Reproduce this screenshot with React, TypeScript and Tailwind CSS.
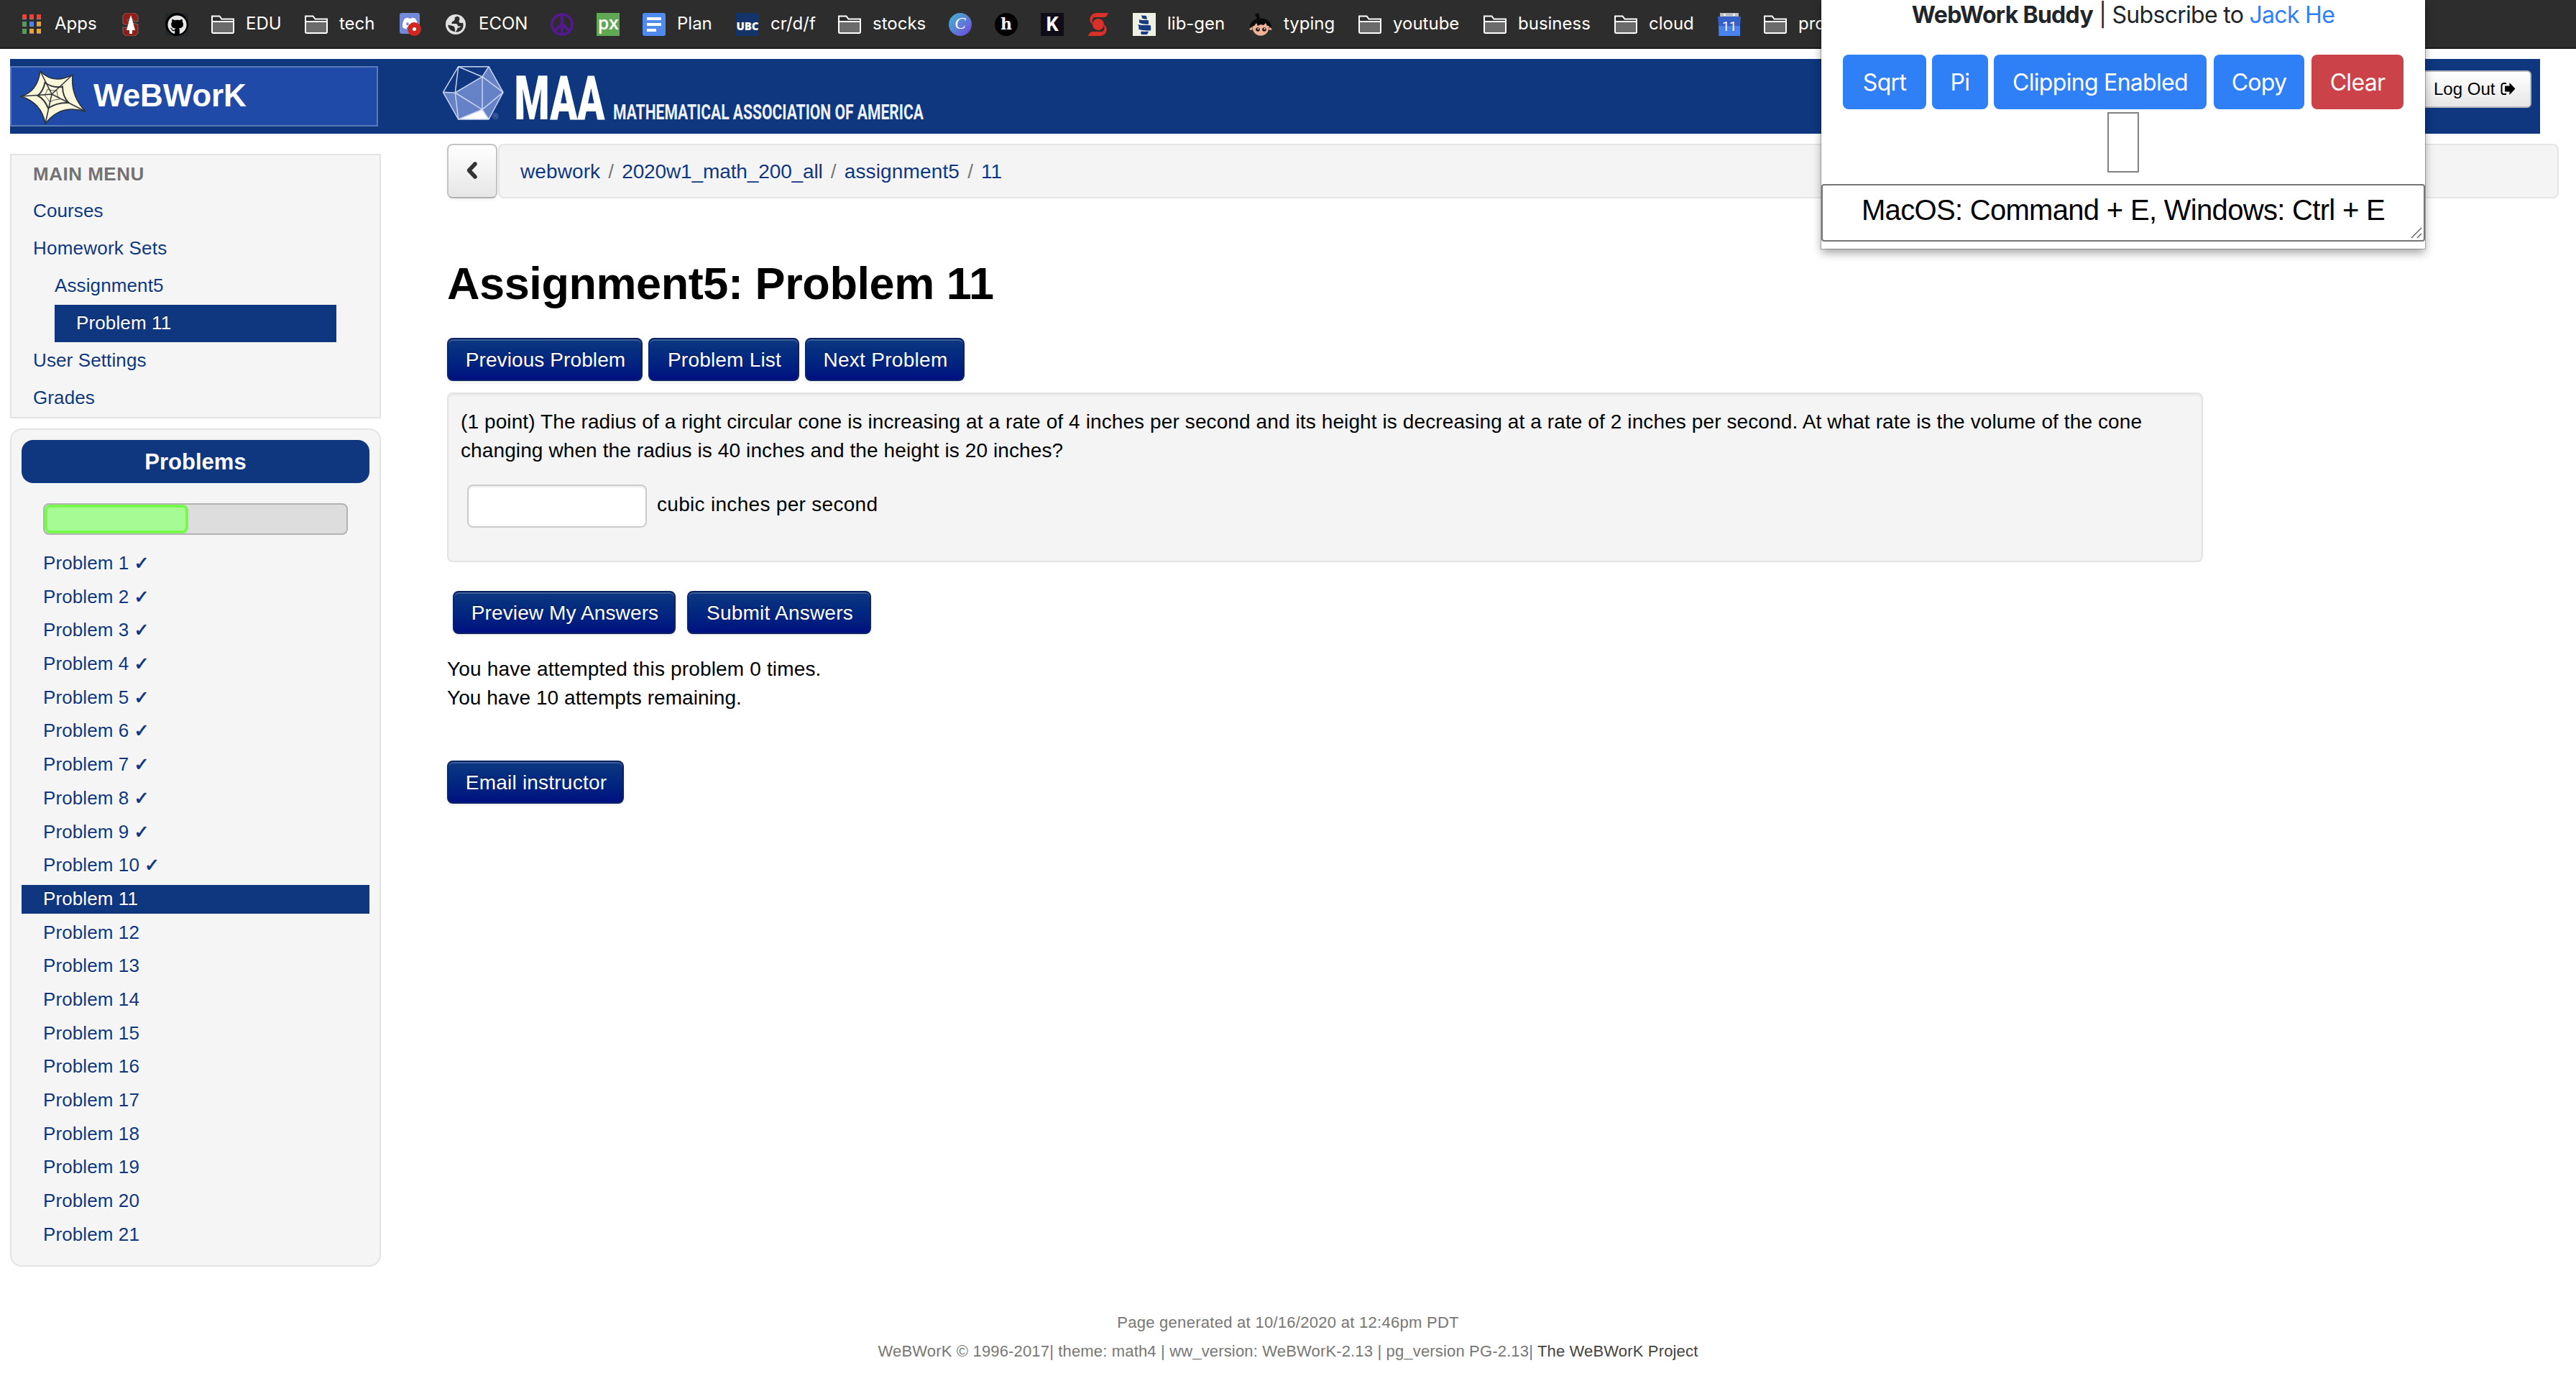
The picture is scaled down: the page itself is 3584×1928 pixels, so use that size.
import React from "react";
import { FaDiscord, FaGithub } from "react-icons/fa";

const FolderIcon = () => (
  <svg className="block size-8" viewBox="0 0 32 32">
    <path d="M1 26.5V4.5h10.5l3 4H31v18a1.500 1.500 0 0 1-1.500 1.500h-27A1.500 1.500 0 0 1 1 26.500z" fill="#2d2d2d" stroke="#fff" strokeWidth="2" />
    <path d="M2 12h28v15H2z" fill="#6b6b6b" />
    <path d="M1 12h30" stroke="#fff" strokeWidth="2" />
  </svg>
);

const AppsIcon = () => (
  <svg className="block size-8" viewBox="0 0 32 32">
    {[
      ["#ea4335", "#ea4335", "#ea4335"],
      ["#4e9f58", "#4285f4", "#eaa337"],
      ["#4e9f58", "#eaa337", "#eaa337"],
    ].map((row, y) =>
      row.map((c, x) => (
        <g key={`${x}-${y}`}>
          <rect x={3 + x * 10} y={2 + y * 10} width="6" height="6" fill={c} />
          <rect x={3 + x * 10} y={8 + y * 10} width="6" height="1" fill="#8a8a8a" />
        </g>
      ))
    )}
  </svg>
);

const StanfordIcon = () => (
  <svg className="block size-8" viewBox="0 0 32 32">
    <path d="M9 0h13l4 4v8h-6v-3H11v3l15 4v12l-4 4H9l-4-4v-8h6v3h9v-4L5 15V4z" fill="#8c1f1a" stroke="#b08a88" strokeWidth="0.6" />
    <path d="M16 3l-2 6-2 8-2 7h4v5h4v-5h4l-2-7-2-8z" fill="#fff" />
  </svg>
);

const GithubIcon = () => (
  <div className="flex size-8 items-center justify-center bg-[#24292e]">
    <div className="flex size-8 items-center justify-center rounded-full bg-black">
      <FaGithub className="size-[27px] text-[#e6e6e6]" />
    </div>
  </div>
);

const DiscordIcon = () => (
  <div className="relative h-8 w-8">
    <div className="flex h-[29px] w-[28px] items-center justify-center rounded-[3px] bg-[#7289da]">
      <FaDiscord className="size-[23px] text-white" />
    </div>
    <div className="absolute top-[13px] left-[11px] flex size-[19px] items-center justify-center rounded-full bg-[#d0281e]">
      <div className="size-[5px] rounded-full bg-white" />
    </div>
  </div>
);

const GlobeIcon = () => (
  <svg className="block size-8" viewBox="0 0 32 32">
    <circle cx="16" cy="16" r="14" fill="#e1e1e1" />
    <path d="M18 4.500c-1.500 1-3.500 1.500-3.500 3 .500 1.500 0 2.500-1 3.500-2 .500-3.500 2-3 4h6c2 .500 2.500 2 2.500 3.500h4c-.500 2-3 2-4.500 2.500 0 2-1.500 4-3 5.500 5 .500 9-2 10.500-6 1-3 .500-5 0-7-2 .800-4.500 1-5-.500-.500-1-1-2.500.500-3.500-.500-1.500 0-2.500-.500-3.500z" fill="#2d2d2d" />
    <path d="M5.500 16.500l6 1.500c2 .500 3.500 1.500 3 3.500 1 1 .500 2.500.500 4.500C9 25.500 5 21 5.500 16.500z" fill="#2d2d2d" />
  </svg>
);

const PeaceIcon = () => (
  <svg className="block size-8" viewBox="0 0 32 32" fill="none" stroke="#541991" strokeWidth="3.600">
    <circle cx="16" cy="16" r="14" />
    <path d="M16 2v28M16 15L6 25M16 15l10 10" strokeWidth="4" />
  </svg>
);

const PxIcon = () => (
  <div className="size-8 bg-[#60a854] text-center font-['Open_Sans',sans-serif] text-[25px] leading-[26px] font-semibold tracking-[-0.5px] text-white">px</div>
);

const DocIcon = () => (
  <svg className="block size-8" viewBox="0 0 32 32">
    <rect width="32" height="32" rx="3" fill="#4f8bee" />
    <path d="M6 8h20M6 16h20M6 24h13" stroke="#fff" strokeWidth="4" />
  </svg>
);

const UbcIcon = () => (
  <div className="flex size-8 items-center justify-center bg-[#12346a] pt-1 font-['Open_Sans',sans-serif] text-[15px] leading-none font-extrabold text-white">UBC</div>
);

const CanvaIcon = () => (
  <div className="size-8 rounded-full bg-linear-to-br from-[#35b5c8] to-[#6a3ae0] text-center font-['Liberation_Serif',serif] text-[23px] leading-[30px] text-white italic">C</div>
);

const HIcon = () => (
  <div className="size-8 rounded-full bg-black text-center font-['DejaVu_Serif',serif] text-[22px] leading-[31px] font-bold text-white">h</div>
);

const KIcon = () => (
  <div className="size-8 bg-[#0f0c18] text-center font-[Roboto,sans-serif] text-[27px] leading-8 font-bold text-white">K</div>
);

const ScotiaIcon = () => (
  <svg className="block size-8" viewBox="0 0 32 32" fill="#d9302a">
    <circle cx="16" cy="16" r="8" />
    <path d="M30 0c-1 3-3 6-6 6H12c-3 0-4.500 2-4.500 5l.500 5c-4-3-5-8-2-12 2-3 5-4 8-4z" />
    <path d="M2 32c1-3 3-6 6-6h12c3 0 4.500-2 4.500-5L24 16c4 3 5 8 2 12-2 3-5 4-8 4z" />
  </svg>
);

const LibgenIcon = () => (
  <svg className="block size-8" viewBox="0 0 32 32">
    <rect width="32" height="32" fill="#eef0e2" />
    <path d="M12 3c3 1.500 5 0 7 1.500l1 4c-2 .500-5 0-7-1zM9 9c4 2 9 0 13 1.500v5c-4 .500-9 0-13-2zM7 16c6 2 13 0 18 1.500 0 2 .500 5 0 7-6 0-12 0-17-2 1-1.500.500-4.500-1-6.500zM12 25.500c4 1 8 0 10 .500l-2 4h-8c-1-1-1-3 0-4.500z" fill="#173a80" />
  </svg>
);

const TypingIcon = () => (
  <svg className="block size-8" viewBox="0 0 32 32">
    <path d="M8 2l5-2 2 8h-4z" fill="#0b0b0d" />
    <circle cx="16" cy="20" r="11.500" fill="#efb397" />
    <circle cx="2.500" cy="22" r="2" fill="#efb397" />
    <circle cx="29.500" cy="22" r="2" fill="#efb397" />
    <path d="M1 22C0 13 7 7.500 16 7.500S32 13 31 22l-3-4-3 0-2-4-3 3-4-1-4 2-2-4-3 4-4 1z" fill="#0b0b0d" />
    <circle cx="12" cy="23" r="2.800" fill="#2b1512" />
    <circle cx="21" cy="23" r="2.800" fill="#2b1512" />
    <circle cx="12.500" cy="22" r="1" fill="#fff" />
    <circle cx="21.500" cy="22" r="1" fill="#fff" />
  </svg>
);

const CalendarIcon = () => (
  <div className="relative size-8">
    <svg className="block size-8" viewBox="0 0 32 32">
      <path d="M3 0h26v8H3z" fill="#b9bdc4" />
      <circle cx="9.500" cy="2.500" r="1.500" fill="#fff" />
      <circle cx="22.500" cy="2.500" r="1.500" fill="#fff" />
      <path d="M0 5h32l-1 13H1z" fill="#3560c8" />
      <path d="M1 18h30v14H1.500z" fill="#4a83ee" />
    </svg>
    <div className="absolute inset-0 text-center font-[Roboto,sans-serif] text-[18px] leading-[37px] text-white">11</div>
  </div>
);

const bookmarks: { icon: () => React.ReactElement; label?: string; box: string }[] = [
  { icon: AppsIcon, label: "Apps", box: "w-[138px]" },
  { icon: StanfordIcon, box: "w-[64px]" },
  { icon: GithubIcon, box: "w-[64px]" },
  { icon: FolderIcon, label: "EDU", box: "w-[130px]" },
  { icon: FolderIcon, label: "tech", box: "w-[132px]" },
  { icon: DiscordIcon, box: "w-[62px]" },
  { icon: GlobeIcon, label: "ECON", box: "w-[148px]" },
  { icon: PeaceIcon, box: "w-[64px]" },
  { icon: PxIcon, box: "w-[64px]" },
  { icon: DocIcon, label: "Plan", box: "w-[130px]" },
  { icon: UbcIcon, label: "cr/d/f", box: "w-[142px]" },
  { icon: FolderIcon, label: "stocks", box: "w-[154px]" },
  { icon: CanvaIcon, box: "w-[64px]" },
  { icon: HIcon, box: "w-[64px]" },
  { icon: KIcon, box: "w-[64px]" },
  { icon: ScotiaIcon, box: "w-[64px]" },
  { icon: LibgenIcon, label: "lib-gen", box: "w-[162px]" },
  { icon: TypingIcon, label: "typing", box: "w-[152px]" },
  { icon: FolderIcon, label: "youtube", box: "w-[174px]" },
  { icon: FolderIcon, label: "business", box: "w-[182px]" },
  { icon: FolderIcon, label: "cloud", box: "w-[144px]" },
  { icon: CalendarIcon, box: "w-[64px]" },
  { icon: FolderIcon, label: "pro", box: "w-[160px]" },
];

function BookmarksBar() {
  return (
    <div className="h-[68px] border-b-2 border-[#1b1b1b] bg-[#2d2d2d]">
      <div className="flex h-[68px] items-center overflow-hidden pl-7 font-[Inter,sans-serif] text-[24px] leading-8 text-white">
        {bookmarks.map(({ icon: Icon, label, box }, i) => (
          <div key={i} className={`flex shrink-0 gap-4 ${box}`}>
            <Icon />
            {label && <span className="-mt-px whitespace-nowrap">{label}</span>}
          </div>
        ))}
      </div>
    </div>
  );
}

const WebLogo = () => (
  <svg className="block h-[76px] w-[94px]" viewBox="28 98 94 76" fill="none">
    <path d="M29 134Q52 128 56 99Q74 118 101 104Q98 134 119 155Q84 144 63 172Q58 143 29 134z" fill="#fbf8dc" stroke="#2a2f3a" strokeWidth="1.500" />
    <path d="M52.500 133Q60 127 62.500 115Q74 123 87 120.500Q87 134 95.500 143Q80 142 67 150.500Q62 138 52.500 133z" stroke="#33373c" strokeWidth="2" />
    <path d="M62 132.500Q65 129 66 124Q72 127 79 126Q79 133 83 138Q75 138 69 142Q66 136 62 132.500z" stroke="#55575a" strokeWidth="1" />
    <path d="M29 134l43-3L56 99M72 131l29-27M72 131l47 24M72 131l-9 41" stroke="#33373c" strokeWidth="1.600" />
  </svg>
);

const MaaLogo = () => (
  <svg className="block h-[80px] w-[680px]" viewBox="616 90 680 80">
    <g fill="#6582c6">
      <path d="M671 106.700L633.300 129 671 152.300zM671 106.700v45.600l29-24zM680 92.700l-9 14 29 21.600zM616 128.300l17.300.700 4.400 37zM633.300 129l37.700 23.300-33.300 13.700zM671 152.300l29-24-20 37.700z" />
    </g>
    <path d="M671 152.300L637.700 166H680z" fill="#fff" />
    <g fill="none" stroke="#c9d5f0" strokeWidth="1.500" strokeLinejoin="round">
      <path d="M637.700 92.700H680l20 35.600-20 37.700h-42.300L616.500 128.300z" />
      <path d="M637.700 92.700l33.300 14 9-14M671 106.700l29 21.600M671 106.700L633.300 129l-16.800-.700M633.300 129l4.400-36.300M671 106.700v45.600L633.300 129l4.400 37M700 128.300l-29 24 9 13.700M671 152.300L637.700 166" />
    </g>
    <g fill="#fff" fontFamily="Roboto, sans-serif">
      <text x="685" y="166" fontSize="11" fill="#6582c6">®</text>
      <text x="715.500" y="166" fontSize="86" fontWeight="900" textLength="126" lengthAdjust="spacingAndGlyphs">MAA</text>
      <text x="853" y="166" fontSize="29" fontWeight="700" textLength="432" lengthAdjust="spacingAndGlyphs" fill="#eef2fb">MATHEMATICAL ASSOCIATION OF AMERICA</text>
    </g>
  </svg>
);

const LogOutIcon = () => (
  <svg className="mt-[14px] ml-[8px] block h-[20px] w-[21px]" viewBox="0 0 21 20">
    <path d="M8 2H4.500A3 3 0 0 0 1.500 5v9a3 3 0 0 0 3 3H8" fill="none" stroke="#000" strokeWidth="2" />
    <path d="M12.500 1l8 8.500-8 8.500v-4.500H6v-8h6.500z" fill="#000" />
  </svg>
);

function Navbar() {
  return (
    <div className="mt-[14px] mr-[50px] ml-[14px] flex h-[104px] items-start bg-[#0e3780]">
      <div className="mt-[10px] flex h-[84px] w-[512px] items-start border-2 border-[#5b7ab5] bg-[#1f4aa7] pt-[4px] pl-[12px]">
        <WebLogo />
        <span className="ml-[8px] text-[44px] leading-[69px] font-bold tracking-[-0.1px] text-white">WeBWorK</span>
      </div>
      <div className="mt-[8px] ml-[90px]">
        <MaaLogo />
      </div>
      <div className="mt-[16px] mr-[12px] ml-auto flex h-[52px] w-[160px] rounded-md border-2 border-[#b9b9b9] bg-linear-to-b from-white to-[#e6e6e6] pl-[22px] text-[24px] leading-[48px] text-black [text-shadow:0_2px_2px_rgba(255,255,255,0.75)]">
        Log Out
        <LogOutIcon />
      </div>
    </div>
  );
}

const link = "text-[#0e3780] [text-shadow:0_2px_0_#ffffff]";

function MainMenu() {
  return (
    <div className="h-[368px] border-2 border-[#e3e3e3] bg-[#f5f5f5] text-[26px] leading-[52px] tracking-[0.12px]">
      <div className="h-[52px] pl-[30px] font-bold tracking-[0.5px] text-[#737373] [text-shadow:0_2px_0_#ffffff]">MAIN MENU</div>
      <div className="leading-[50px]">
        <div className={`h-[52px] pl-[30px] ${link}`}>Courses</div>
        <div className={`h-[52px] pl-[30px] tracking-[0.22px] ${link}`}>Homework Sets</div>
        <div className={`h-[52px] pl-[60px] ${link}`}>Assignment5</div>
        <div className="ml-[60px] h-[52px] w-[392px] bg-[#0e3780] pl-[30px] text-white [text-shadow:0_-2px_0_rgba(0,0,0,0.2)]">Problem 11</div>
        <div className={`h-[52px] pl-[30px] ${link}`}>User Settings</div>
        <div className={`h-[52px] pl-[30px] ${link}`}>Grades</div>
      </div>
    </div>
  );
}

function ProblemsPanel() {
  const problems = Array.from({ length: 21 }, (_, i) => i + 1);
  return (
    <div className="mt-[14px] h-[1166px] rounded-[16px] border-2 border-[#e3e3e3] bg-[#f5f5f5] p-[14px]">
      <div className="h-[60px] rounded-[16px] bg-[#0e3780] text-center text-[31px] leading-[62px] font-bold text-white">Problems</div>
      <div className="mx-[30px] mt-[28px] h-[44px] rounded-[8px] border-2 border-[#b3b3b3] bg-[#dddddd]">
        <div className="h-[40px] w-[200px] rounded-[8px] border-4 border-[#76fa4c] bg-[#a6fb95]" />
      </div>
      <div className="mt-[20px] flex flex-col gap-[6.7px] text-[26px] leading-[39px] tracking-[0.1px]">
        {problems.map((n) => (
          <div
            key={n}
            className={
              n === 11
                ? "h-10 bg-[#0e3780] pl-[30px] text-white [text-shadow:0_-2px_0_rgba(0,0,0,0.2)]"
                : "h-10 pl-[30px] text-[#0e3780] [text-shadow:0_2px_0_#ffffff]"
            }
          >
            Problem {n}
            {n < 11 && (
              <span className="ml-[7px] font-['DejaVu_Sans',sans-serif] text-[25px] leading-none [-webkit-text-stroke:0.9px_#0e3780]">✓</span>
            )}
          </div>
        ))}
      </div>
    </div>
  );
}

const BlueButton = ({ className, children }: { className: string; children: React.ReactNode }) => (
  <button
    className={`h-[60px] rounded-[8px] border-2 border-[#0a2369] border-t-[#05205f] bg-linear-to-b from-[#0e3780] to-[#000f80] text-center text-[28px] leading-[56px] whitespace-nowrap text-white shadow-[inset_0_2px_0_rgba(255,255,255,0.2),0_2px_4px_rgba(0,0,0,0.08)] [text-shadow:0_-2px_0_rgba(0,0,0,0.25)] ${className}`}
  >
    <span className="relative top-px left-px">{children}</span>
  </button>
);

const Slash = () => <span className="w-[30px] text-center text-[#777777]">/</span>;

function Breadcrumb() {
  return (
    <div className="flex gap-px">
      <div className="flex h-[76px] w-[70px] items-center justify-center rounded-[8px] border-2 border-[#c4c4c4] border-b-[#b0b0b0] bg-linear-to-b from-white to-[#e6e6e6] shadow-[0_2px_4px_rgba(0,0,0,0.06)]">
        <svg className="mr-[2px] -mt-0.5 block h-[26px] w-[18px]" viewBox="0 0 18 26">
          <path d="M14 4L5.500 13l8.500 9" fill="none" stroke="#333" strokeWidth="5.500" strokeLinecap="round" strokeLinejoin="round" />
        </svg>
      </div>
      <div className={`flex h-[76px] flex-1 rounded-[8px] border-2 border-[#e5e5e5] bg-[#f4f4f4] pl-[29px] text-[28px] leading-[73px] ${link}`}>
        <span className="tracking-[0.1px]">webwork</span>
        <Slash />
        <span className="tracking-[-0.12px]">2020w1_math_200_all</span>
        <Slash />
        <span className="tracking-[0.15px]">assignment5</span>
        <Slash />
        <span>11</span>
      </div>
    </div>
  );
}

function ProblemContent() {
  return (
    <div className="text-black">
      <h1 className="mt-[78px] text-[63px] leading-[80px] font-bold tracking-[-0.42px]">Assignment5: Problem 11</h1>
      <div className="mt-[36px] flex gap-2">
        <BlueButton className="w-[272px] tracking-[0.1px]">Previous Problem</BlueButton>
        <BlueButton className="w-[210px] tracking-[0.2px]">Problem List</BlueButton>
        <BlueButton className="w-[222px] tracking-[0.3px]">Next Problem</BlueButton>
      </div>
      <div className="mt-[16px] h-[236px] w-[2443px] rounded-[8px] border-2 border-[#e3e3e3] bg-[#f4f4f4] pt-[19px] pl-[17px] text-[28px] leading-[40px] shadow-[inset_0_2px_2px_rgba(0,0,0,0.05)]">
        <p className="tracking-[0.106px] whitespace-nowrap">
          (1 point) The radius of a right circular cone is increasing at a rate of 4 inches per second and its height is decreasing at a rate of 2 inches per second. At what rate is the volume of the cone
          <br />
          changing when the radius is 40 inches and the height is 20 inches?
        </p>
        <div className="mt-[27px] ml-[9px] flex items-start">
          <input className="h-[60px] w-[250px] rounded-[8px] border-2 border-[#cccccc] bg-white shadow-[inset_0_2px_2px_rgba(0,0,0,0.075)]" />
          <span className="mt-[8px] ml-[14px] tracking-[0.3px]">cubic inches per second</span>
        </div>
      </div>
      <div className="mt-[40px] ml-[8px] flex gap-4">
        <BlueButton className="w-[310px] tracking-[0.12px]">Preview My Answers</BlueButton>
        <BlueButton className="w-[256px] tracking-[0.22px]">Submit Answers</BlueButton>
      </div>
      <div className="mt-[29px] text-[28px] leading-[40px]">
        <div className="tracking-[0.16px]">You have attempted this problem 0 times.</div>
        <div className="tracking-[0.05px]">You have 10 attempts remaining.</div>
      </div>
      <div className="mt-[67px] flex">
        <BlueButton className="w-[246px] tracking-[0.22px]">Email instructor</BlueButton>
      </div>
    </div>
  );
}

function Popup() {
  const btn = "h-[76px] rounded-[8px] text-center leading-[78px] text-white";
  return (
    <div className="absolute top-0 left-[2534px] h-[346px] w-[840px] overflow-visible bg-white font-[Inter,sans-serif] text-[32px] tracking-[-0.7px] shadow-[0_0_0_1px_rgba(0,0,0,0.25),0_6px_12px_rgba(0,0,0,0.35)]">
      <div className="-mt-[3px] h-[79px] text-center leading-[48px] whitespace-nowrap text-[#212529]">
        <b>WebWork Buddy</b> | Subscribe to <span className="text-[#2f7ff7]">Jack He</span>
      </div>
      <div className="ml-[30px] flex">
        <button className={`w-[116px] bg-[#2f7ff7] ${btn}`}>Sqrt</button>
        <button className={`ml-[8px] w-[78px] bg-[#2f7ff7] ${btn}`}>Pi</button>
        <button className={`ml-[8px] w-[296px] bg-[#2f7ff7] ${btn}`}>Clipping Enabled</button>
        <button className={`ml-[10px] w-[126px] bg-[#2f7ff7] ${btn}`}>Copy</button>
        <button className={`ml-[10px] w-[128px] bg-[#cb4248] ${btn}`}>Clear</button>
      </div>
      <div className="mx-auto mt-[4px] h-[84px] w-[44px] border-2 border-[#828282] bg-white" />
      <div className="relative mt-[16px] h-[80px] rounded-[4px] border-2 border-[#767676] bg-white text-center font-['Liberation_Sans',sans-serif] text-[40px] leading-[68px] tracking-[-0.69px] text-black">
        MacOS: Command + E, Windows: Ctrl + E
        <svg className="absolute right-[2px] bottom-[2px] size-[16px]" viewBox="0 0 16 16" stroke="#555" strokeWidth="1.300">
          <path d="M1 15L15 1M9 15l6-6" />
        </svg>
      </div>
    </div>
  );
}

export default function App() {
  return (
    <div className="relative h-[1928px] w-[3584px] overflow-hidden bg-white font-['Liberation_Sans',Arial,sans-serif]">
      <BookmarksBar />
      <Navbar />
      <div className="flex items-start pt-[14px] pl-[14px]">
        <aside className="mt-[14px] w-[516px]">
          <MainMenu />
          <ProblemsPanel />
        </aside>
        <main className="mr-[24px] ml-[92px] flex-1">
          <Breadcrumb />
          <ProblemContent />
        </main>
      </div>
      <footer className="mt-[58px] text-center text-[22px] leading-[40px] text-[#777777]">
        <div className="tracking-[0.28px]">Page generated at 10/16/2020 at 12:46pm PDT</div>
        <div className="tracking-[0.16px]">
          WeBWorK © 1996-2017| theme: math4 | ww_version: WeBWorK-2.13 | pg_version PG-2.13| <span className="text-[#444444]">The WeBWorK Project</span>
        </div>
      </footer>
      <Popup />
    </div>
  );
}
